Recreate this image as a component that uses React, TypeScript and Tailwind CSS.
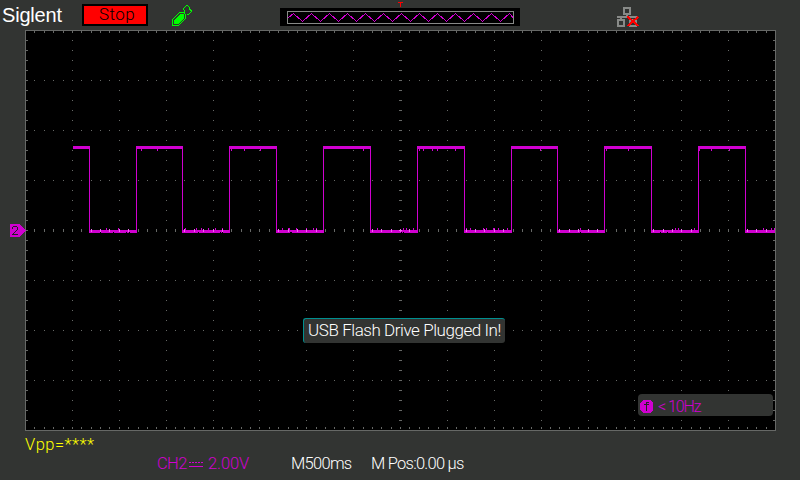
import React from "react";

const WIDTH = 751;
const HEIGHT = 401;
const COLUMN_STEP = 46.875;
const MINOR_STEP = 9.375;
const EDGES = [89, 136, 182, 229, 276, 323, 370, 417, 464, 511, 557, 604, 651, 698, 745].map((x) => x - 25);

type Rect = [number, number, number, number];

function gridMarks(): Rect[] {
  const marks: Rect[] = [];
  for (let i = 1; i < 80; i++) {
    const x = Math.round(25 + i * MINOR_STEP) - 25;
    marks.push([x, 1, 1, 2], [x, 397, 1, 2], [x, 199, 1, 3]);
    for (let y = 50; y < 400; y += 50) if (y !== 200) marks.push([x, y, 1, 1]);
  }
  for (let y = 10; y < 400; y += 10) {
    marks.push([1, y, 2, 1], [748, y, 2, 1], [374, y, 3, 1]);
    for (let c = 1; c < 16; c++) {
      if (c !== 8) marks.push([Math.round(25 + c * COLUMN_STEP) - 25, y, 1, 1]);
    }
  }
  return marks;
}

function waveMarks(): Rect[] {
  const marks: Rect[] = [[48, 116, 17, 3]];
  EDGES.forEach((x, i) => {
    const end = EDGES[i + 1] ?? 749;
    marks.push([x, 116, 1, 87]);
    marks.push(i % 2 === 0 ? [x, 200, end - x + 1, 3] : [x, 116, end - x + 1, 3]);
  });
  return marks;
}

const SPIKES_LOW = [106, 118, 185, 196, 201, 208, 215, 222, 282, 288, 289, 296, 306, 313, 316, 377, 403, 406, 413, 466, 470, 483, 486, 493, 494, 498, 507, 580, 675, 678, 694, 763, 771, 774];
const SPIKES_HIGH = [141, 157, 231, 244, 260, 363, 419, 423, 432, 437, 455, 540, 606, 628, 699, 711, 729];
const NOTCHES = [100, 113, 126, 129, 198, 220, 222, 290, 291, 401, 403, 580, 660, 667];

function Scope() {
  return (
    <svg width={WIDTH} height={HEIGHT} shapeRendering="crispEdges" className="block bg-black">
      <g fill="#666866">
        {gridMarks().map(([x, y, w, h], i) => <rect key={i} x={x} y={y} width={w} height={h} />)}
      </g>
      <rect x=".5" y=".5" width="750" height="400" fill="none" stroke="#666866" />
      <g fill="#d000d0">
        {waveMarks().map(([x, y, w, h], i) => <rect key={i} x={x} y={y} width={w} height={h} />)}
        {SPIKES_LOW.map((x) => <rect key={x} x={x - 25} y="198" width="1" height="2" />)}
        {SPIKES_HIGH.map((x) => <rect key={x} x={x - 25} y="119" width="1" height="2" />)}
      </g>
      <g fill="#000">
        {NOTCHES.map((x) => <rect key={x} x={x - 25} y="202" width="1" height="1" />)}
      </g>
      <g fill="#f068f0">
        {EDGES.filter((_, i) => i % 2 === 0).flatMap((start, s) => {
          const end = EDGES[s * 2 + 1] ?? 750;
          return Array.from({ length: 79 }, (_, i) => Math.round(25 + (i + 1) * MINOR_STEP) - 25)
            .filter((x) => x > start && x < end)
            .map((x) => <rect key={x} x={x} y="199" width="1" height="3" />);
        })}
        <rect x="374" y="200" width="3" height="1" />
      </g>
    </svg>
  );
}

const ZIGZAG = Array.from({ length: 25 }, (_, i) => `${13.5 + i * 9},${i % 2 === 0 ? 13.5 : 21.5}`).join(" ");

function MemoryBar() {
  return (
    <svg width="240" height="26" className="ml-[87px] block" shapeRendering="crispEdges">
      <path d="M118 2h5v1h-2v4h-1V3h-2z" fill="#f00" />
      <rect y="8" width="240" height="18" fill="#000" />
      <rect x="7.5" y="11.5" width="226" height="12" fill="none" stroke="#888a88" />
      <polyline points={`8.5,17.5 ${ZIGZAG} 233,17.5`} fill="none" stroke="#d000d0" />
    </svg>
  );
}

export default function App() {
  return (
    <div className="relative flex h-[480px] w-[800px] flex-col overflow-hidden bg-[#323432] font-['Roboto',sans-serif] leading-none">
      <header className="flex h-[30px] items-start">
        <div className="w-[82px] pt-[5px] pl-[2px] font-['Liberation_Sans',sans-serif] text-[20px] leading-5 tracking-[-0.2px] text-white">Siglent</div>
        <div className="mt-1 flex h-[22px] w-[66px] items-center justify-center border-2 border-black bg-[#f00] pb-px pl-[4px] text-[17px] font-light tracking-[0.4px] text-black">Stop</div>
        <svg width="22" height="22" viewBox="0 0 22 22" className="mt-[5px] ml-[23px] block" shapeRendering="crispEdges">
          <path d="M1.500 20.500V14.500L8.500 7.500H12.500L14.500 9.500V13.500L7.500 20.500Z" fill="none" stroke="#0f0" />
          <path d="M3 19V15L9 9H12L13 10V13L7 19Z" fill="#0f0" />
          <path d="M13.500 7.500V5.500L12.500 4.500V3.500L15.500 .5H16.500L18.500 2.500V4.500L20.500 5.500V6.500L17.500 9.500H15.500" fill="none" stroke="#0f0" />
        </svg>
        <MemoryBar />
        <svg width="24" height="23" className="mt-[6px] ml-[96px] block" shapeRendering="crispEdges">
          <g fill="none" stroke="#888a88" strokeWidth="2">
            <rect x="8" y="2" width="6" height="6" />
            <path d="M11 9v2M1 11h20M5 11v3" />
            <rect x="2" y="14" width="6" height="6" />
            <rect x="14" y="14" width="6" height="6" />
          </g>
          <path d="M11.500 10.500L22.500 20M22.500 10.500L11.500 20" stroke="#f00" strokeWidth="2" />
        </svg>
      </header>
      <main className="ml-[25px] h-[401px]"><Scope /></main>
      <footer className="h-[49px]">
        <div className="h-[25px] pt-[5px] pl-[25px] text-[16.5px] leading-[17px] font-light tracking-[0.5px] text-[#ff0]">Vpp=****</div>
        <div className="flex h-[17px] items-center text-[16.5px] font-light text-white">
          <div className="ml-[157px] flex w-[134px] items-center text-[#d000d0]">
            <span className="w-[32px] tracking-[-0.6px]">CH2</span>
            <svg width="14" height="7" className="mr-[5px]" shapeRendering="crispEdges"><path d="M0 1.500H14" stroke="#d000d0" strokeDasharray="2 1" /><path d="M0 5.500H14" stroke="#d000d0" /></svg>
            <span className="tracking-[-0.1px]">2.00V</span>
          </div>
          <span className="w-[80px] tracking-[-0.7px]">M500ms</span>
          <span className="tracking-[-0.75px]">M Pos:0.00 µs</span>
        </div>
      </footer>

      <svg width="16" height="13" className="absolute top-[224px] left-[10px]" shapeRendering="crispEdges">
        <path d="M0 0H10L16 6.500L10 13H0Z" fill="#d000d0" />
        <path d="M2.500 4.500V3.500L3.500 2.500H6.500L7.500 3.500V5.500L2.500 10.500H8" fill="none" stroke="#222" />
      </svg>
      <div className="absolute top-[318px] left-[303px] flex h-[25px] w-[202px] items-center justify-center rounded-[3px] border-t border-l border-[#009090] bg-[#323432] pb-[2px] text-[17px] font-light tracking-[-0.44px] whitespace-nowrap text-white">USB Flash Drive Plugged In!</div>
      <div className="absolute top-[394px] left-[638px] flex h-[22px] w-[135px] items-center rounded-[4px] bg-[#323432] text-[16px] font-light text-[#d000d0]">
        <svg width="13" height="13" className="mt-[2px] mr-[5px] ml-[2px]" shapeRendering="crispEdges">
          <path d="M3 0H10L13 3V10L10 13H3L0 10V3Z" fill="#d000d0" />
          <path d="M8.500 2.500H6.500V11M4 4.500H9" fill="none" stroke="#222" />
        </svg>
        <span className="pt-[3px] tracking-[-1.1px]">&lt; 10Hz</span>
      </div>
    </div>
  );
}
